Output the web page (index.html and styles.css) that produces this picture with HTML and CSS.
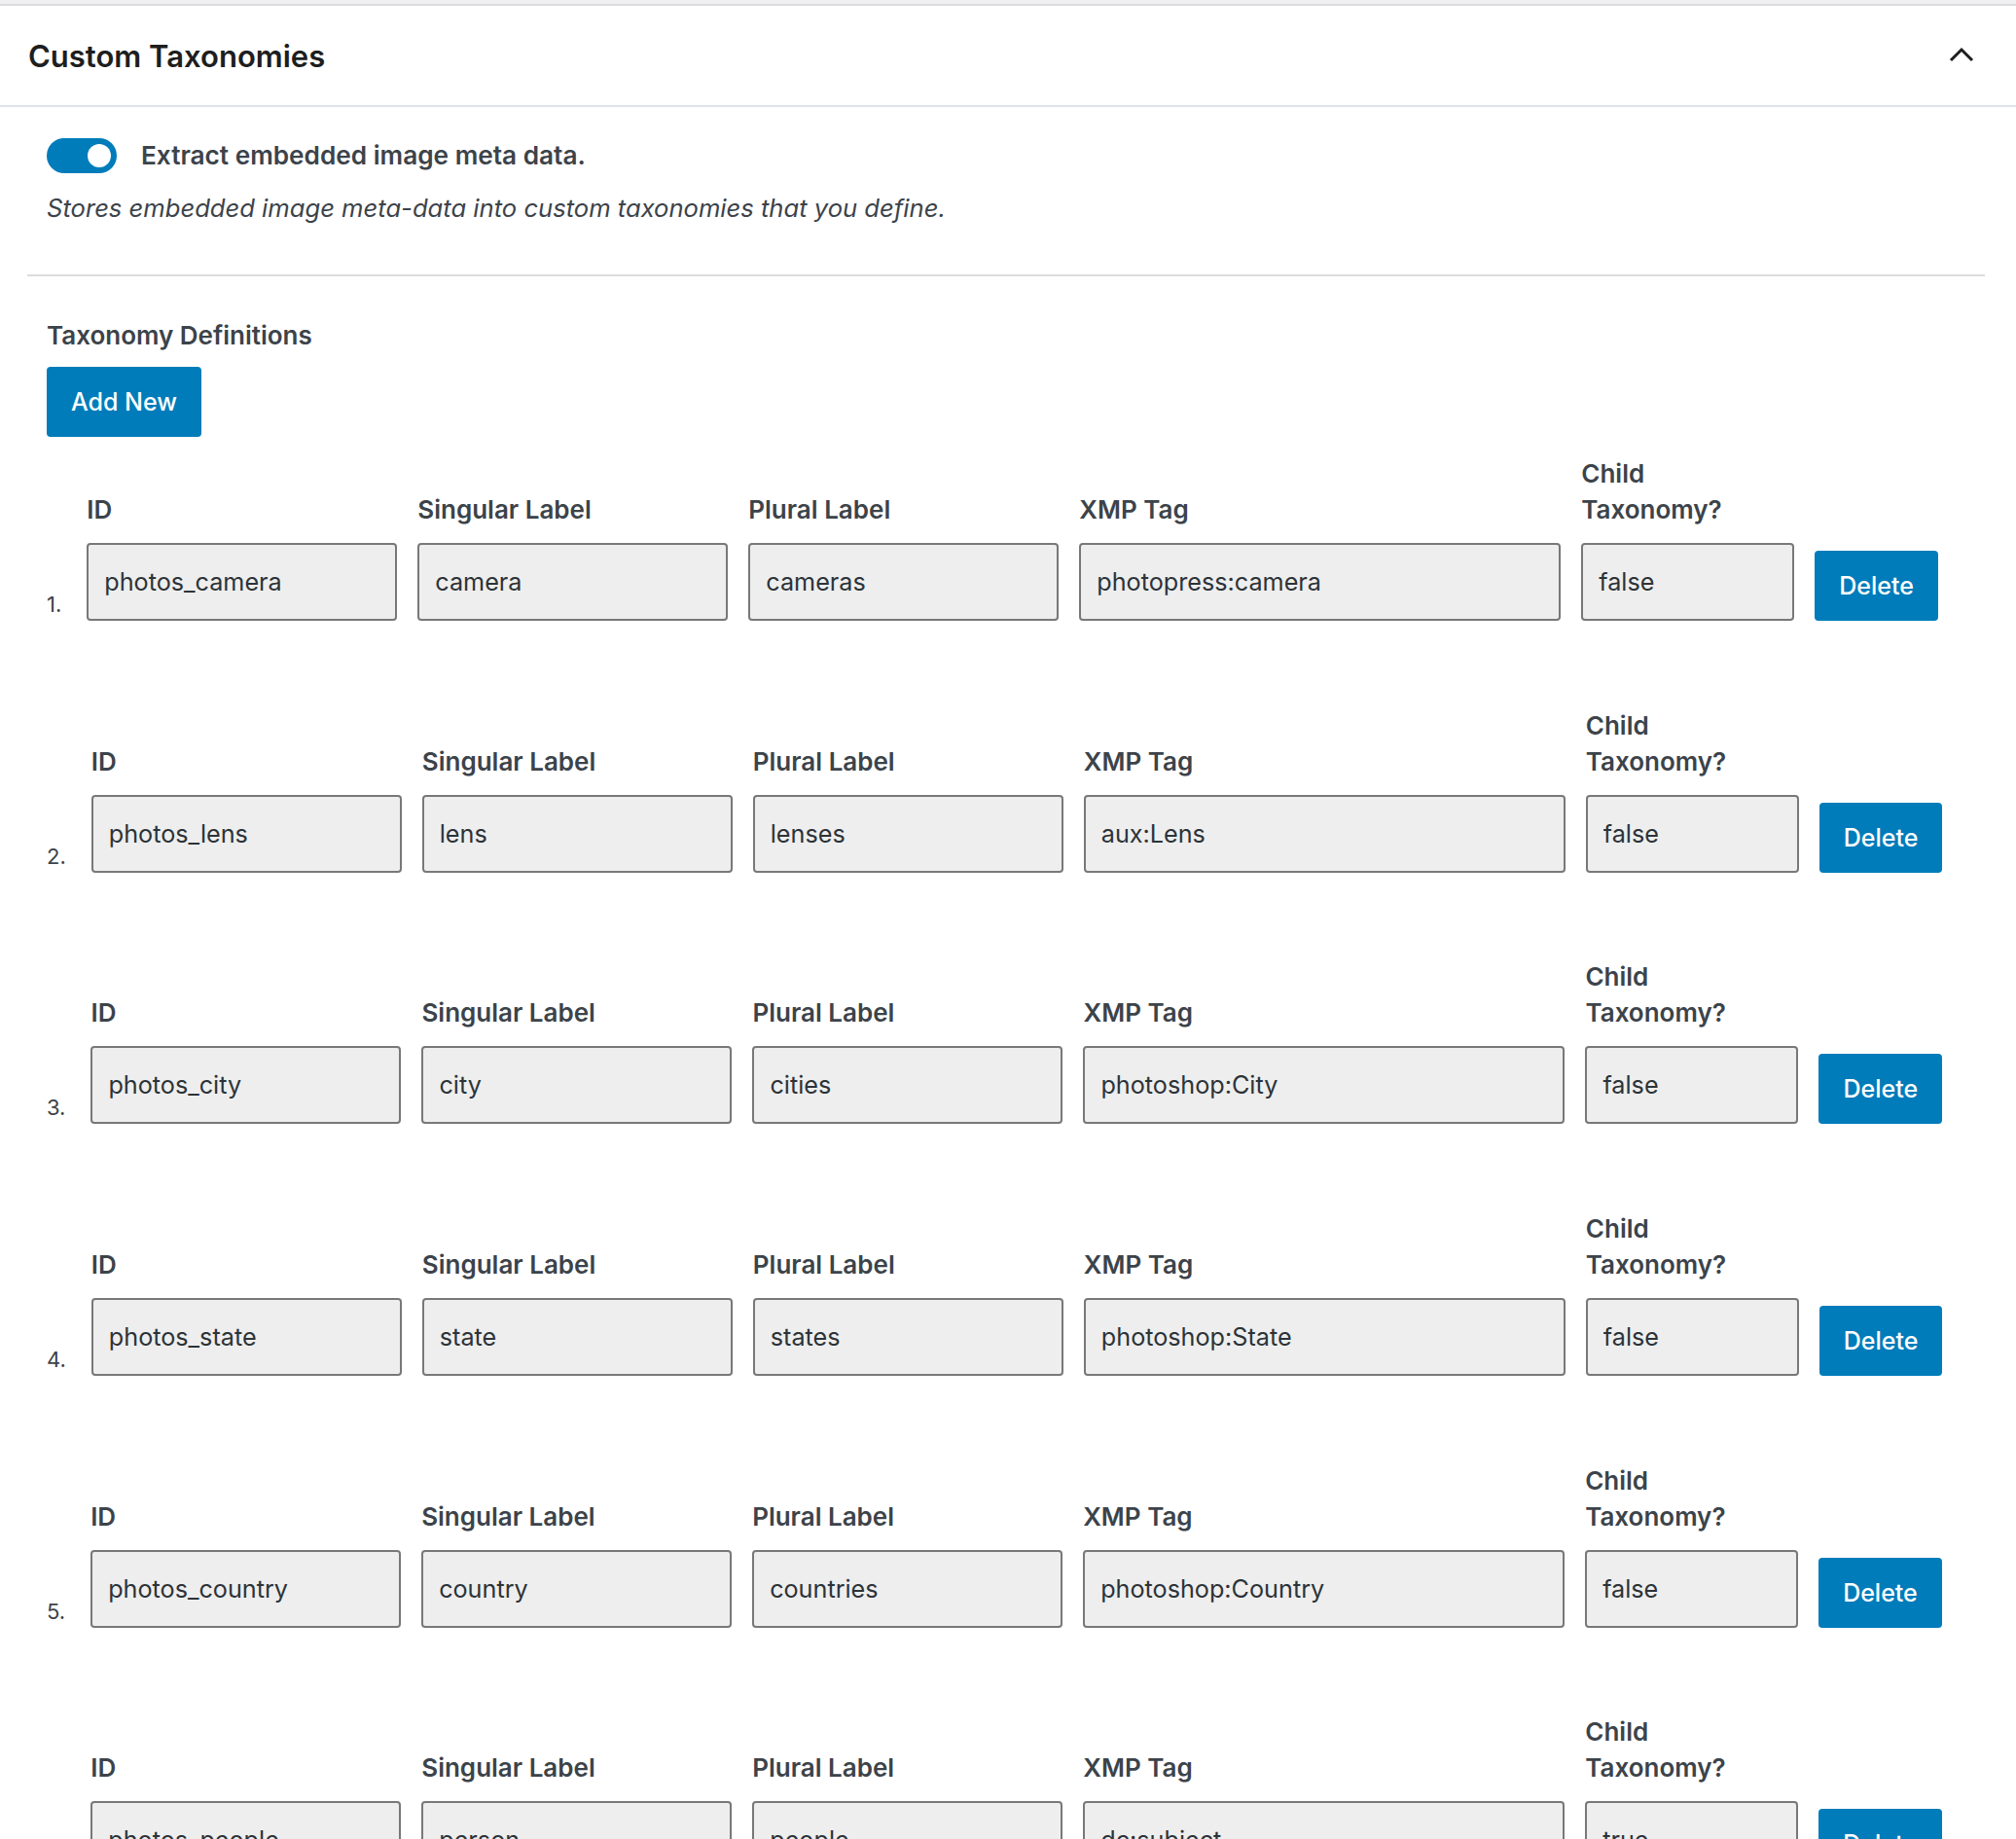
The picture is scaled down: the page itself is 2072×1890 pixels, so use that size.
FILE: index.html
```html
<!DOCTYPE html>
<html lang="en">
<head>
<meta charset="utf-8">
<title>Custom Taxonomies</title>
<link rel="stylesheet" href="styles.css">
</head>
<body>
<div class="topbar"></div>
<section class="panel">
  <header class="panel-head">
    <h2 class="panel-title">Custom Taxonomies</h2>
    <svg class="chevron" width="26" height="16" viewBox="0 0 26 16" aria-hidden="true"><polyline points="2,14 13,3 24,14" fill="none" stroke="#1e1e1e" stroke-width="3"/></svg>
  </header>
  <div class="panel-body">
    <div class="toggle-row">
      <span class="toggle"><span class="knob"></span></span>
      <span class="toggle-label">Extract embedded image meta data.</span>
    </div>
    <p class="desc">Stores embedded image meta-data into custom taxonomies that you define.</p>
    <div class="divider"></div>
    <div class="defs">
      <h3 class="defs-title">Taxonomy Definitions</h3>
      <button class="btn">Add New</button>
      <ol class="rows">
        <li class="row">
          <span class="num">1.</span>
          <div class="field f-id"><label>ID</label><input type="text" value="photos_camera" readonly></div>
          <div class="field f-sing"><label>Singular Label</label><input type="text" value="camera" readonly></div>
          <div class="field f-plur"><label>Plural Label</label><input type="text" value="cameras" readonly></div>
          <div class="field f-xmp"><label>XMP Tag</label><input type="text" value="photopress:camera" readonly></div>
          <div class="field f-child"><label>Child<br>Taxonomy?</label><input type="text" value="false" readonly></div>
          <button class="btn">Delete</button>
        </li>
        <li class="row">
          <span class="num">2.</span>
          <div class="field f-id"><label>ID</label><input type="text" value="photos_lens" readonly></div>
          <div class="field f-sing"><label>Singular Label</label><input type="text" value="lens" readonly></div>
          <div class="field f-plur"><label>Plural Label</label><input type="text" value="lenses" readonly></div>
          <div class="field f-xmp"><label>XMP Tag</label><input type="text" value="aux:Lens" readonly></div>
          <div class="field f-child"><label>Child<br>Taxonomy?</label><input type="text" value="false" readonly></div>
          <button class="btn">Delete</button>
        </li>
        <li class="row">
          <span class="num">3.</span>
          <div class="field f-id"><label>ID</label><input type="text" value="photos_city" readonly></div>
          <div class="field f-sing"><label>Singular Label</label><input type="text" value="city" readonly></div>
          <div class="field f-plur"><label>Plural Label</label><input type="text" value="cities" readonly></div>
          <div class="field f-xmp"><label>XMP Tag</label><input type="text" value="photoshop:City" readonly></div>
          <div class="field f-child"><label>Child<br>Taxonomy?</label><input type="text" value="false" readonly></div>
          <button class="btn">Delete</button>
        </li>
        <li class="row">
          <span class="num">4.</span>
          <div class="field f-id"><label>ID</label><input type="text" value="photos_state" readonly></div>
          <div class="field f-sing"><label>Singular Label</label><input type="text" value="state" readonly></div>
          <div class="field f-plur"><label>Plural Label</label><input type="text" value="states" readonly></div>
          <div class="field f-xmp"><label>XMP Tag</label><input type="text" value="photoshop:State" readonly></div>
          <div class="field f-child"><label>Child<br>Taxonomy?</label><input type="text" value="false" readonly></div>
          <button class="btn">Delete</button>
        </li>
        <li class="row">
          <span class="num">5.</span>
          <div class="field f-id"><label>ID</label><input type="text" value="photos_country" readonly></div>
          <div class="field f-sing"><label>Singular Label</label><input type="text" value="country" readonly></div>
          <div class="field f-plur"><label>Plural Label</label><input type="text" value="countries" readonly></div>
          <div class="field f-xmp"><label>XMP Tag</label><input type="text" value="photoshop:Country" readonly></div>
          <div class="field f-child"><label>Child<br>Taxonomy?</label><input type="text" value="false" readonly></div>
          <button class="btn">Delete</button>
        </li>
        <li class="row">
          <span class="num">6.</span>
          <div class="field f-id"><label>ID</label><input type="text" value="photos_people" readonly></div>
          <div class="field f-sing"><label>Singular Label</label><input type="text" value="person" readonly></div>
          <div class="field f-plur"><label>Plural Label</label><input type="text" value="people" readonly></div>
          <div class="field f-xmp"><label>XMP Tag</label><input type="text" value="dc:subject" readonly></div>
          <div class="field f-child"><label>Child<br>Taxonomy?</label><input type="text" value="true" readonly></div>
          <button class="btn">Delete</button>
        </li>
      </ol>
    </div>
  </div>
</section>
</body>
</html>
```
FILE: styles.css
```css
* { box-sizing: border-box; }

body {
  margin: 0;
  background: #fff;
  color: #3c434a;
  font-family: Inter, "Noto Sans", "Liberation Sans", sans-serif;
}

.topbar {
  height: 6px;
  background: #f0f0f1;
  border-bottom: 2px solid #dcdcde;
}

.panel-head {
  height: 104px;
  display: flex;
  align-items: center;
  justify-content: space-between;
  padding: 0 43px 0 29px;
  border-bottom: 2px solid #dce3eb;
}

.panel-title {
  margin: 0;
  font-size: 31px;
  font-weight: 600;
  color: #1e1e1e;
}

.chevron {
  display: block;
  margin-bottom: 3px;
}

.panel-body {
  padding: 31px 32px 0 28px;
}

.toggle-row {
  display: flex;
  align-items: center;
  gap: 25px;
  padding-left: 20px;
}

.toggle {
  width: 72px;
  height: 36px;
  border-radius: 18px;
  background: #007cba;
  display: flex;
  align-items: center;
  justify-content: flex-end;
  padding-right: 6px;
}

.knob {
  width: 24px;
  height: 24px;
  border-radius: 50%;
  background: #fff;
}

.toggle-label {
  font-size: 26.2px;
  font-weight: 600;
  line-height: 37px;
}

.desc {
  margin: 17px 0 0;
  padding-left: 20px;
  font-size: 25.6px;
  font-style: italic;
  line-height: 37px;
}

.divider {
  margin-top: 50px;
  border-top: 2px solid #dcdcde;
}

.defs {
  padding-left: 20px;
}

.defs-title {
  margin: 42px 0 0;
  font-size: 26px;
  font-weight: 600;
  line-height: 37px;
}

.btn {
  display: block;
  height: 72px;
  padding: 0 25px;
  border: none;
  border-radius: 4px;
  background: #007cba;
  color: #fff;
  font-family: inherit;
  font-size: 25px;
  font-weight: 500;
  cursor: pointer;
}

.defs-title + .btn {
  margin-top: 14px;
}

.rows {
  list-style: none;
  margin: 19px 0 0;
  padding: 0;
}

.row {
  display: flex;
  align-items: flex-end;
  gap: 21px;
  margin-bottom: 88.7px;
}

.num {
  font-size: 22px;
  line-height: 22px;
  margin-right: 5px;
  margin-bottom: 6px;
  color: #3c434a;
}

.field {
  display: flex;
  flex-direction: column;
}

.field label {
  font-size: 26px;
  font-weight: 600;
  line-height: 37px;
  margin-bottom: 16px;
}

.field input {
  width: 100%;
  height: 80px;
  border: 2px solid #787878;
  border-radius: 4px;
  background: #eeeeee;
  padding: 0 16px;
  font-family: inherit;
  font-size: 25.2px;
  color: #2c3338;
  outline: none;
}

.f-id, .f-sing, .f-plur { width: 319px; }
.f-xmp { width: 495px; }
.f-child { width: 219px; }
```
